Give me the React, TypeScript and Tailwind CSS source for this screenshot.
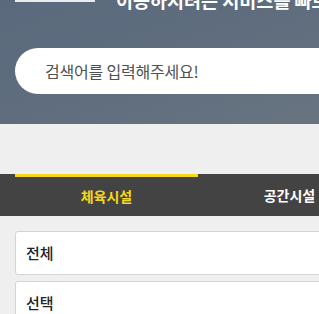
import React from "react";

export default function App() {
  const font = { fontFamily: '"Noto Sans CJK KR", "Noto Sans", sans-serif' };
  return (
    <div className="w-[319px] h-[314px] overflow-hidden bg-[#efefef]" style={font}>
      <div className="h-[124px] bg-[linear-gradient(160deg,#5a6a7c_0%,#5f6d7e_50%,#687480_100%)] relative overflow-hidden">
        <div className="flex items-end h-[11px] relative">
          <div className="ml-[15px] w-[80px] h-[2px] self-start bg-[#e9ebee]" />
          <div className="absolute left-[116px] bottom-[-1px] whitespace-nowrap text-white font-bold text-[18.5px] leading-[24px]">
            이용하시려는 서비스를 빠르게 찾아보세요
          </div>
        </div>
        <div className="mt-[37px] ml-[15px] w-[340px] h-[46px] bg-white rounded-l-full flex items-center pl-[30px]">
          <span className="text-[16px] text-[#505050] tracking-[-0.2px]">검색어를 입력해주세요!</span>
        </div>
      </div>
      <div className="h-[50px]" />
      <div className="h-[42px] bg-[#434343] flex pl-[15px] w-[400px]">
        <div className="w-[183px] shrink-0 border-t-[3px] border-[#f5d81c] flex items-center justify-center">
          <span className="text-[#f5d81c] font-bold text-[14px] -mt-[1px]">체육시설</span>
        </div>
        <div className="w-[183px] shrink-0 flex items-center justify-center">
          <span className="text-white font-bold text-[14px] pt-[1px]">공간시설</span>
        </div>
      </div>
      <div className="pt-[15px] pl-[15px] flex flex-col gap-[6px]">
        <div className="w-[330px] h-[44px] bg-white border border-[#d4d4d4] rounded-[3px] flex items-center pl-[10px]">
          <span className="text-[15px] text-[#222] font-medium">전체</span>
        </div>
        <div className="w-[330px] h-[44px] bg-white border border-[#d4d4d4] rounded-[3px] flex items-center pl-[10px]">
          <span className="text-[15px] text-[#222] font-medium">선택</span>
        </div>
      </div>
    </div>
  );
}
